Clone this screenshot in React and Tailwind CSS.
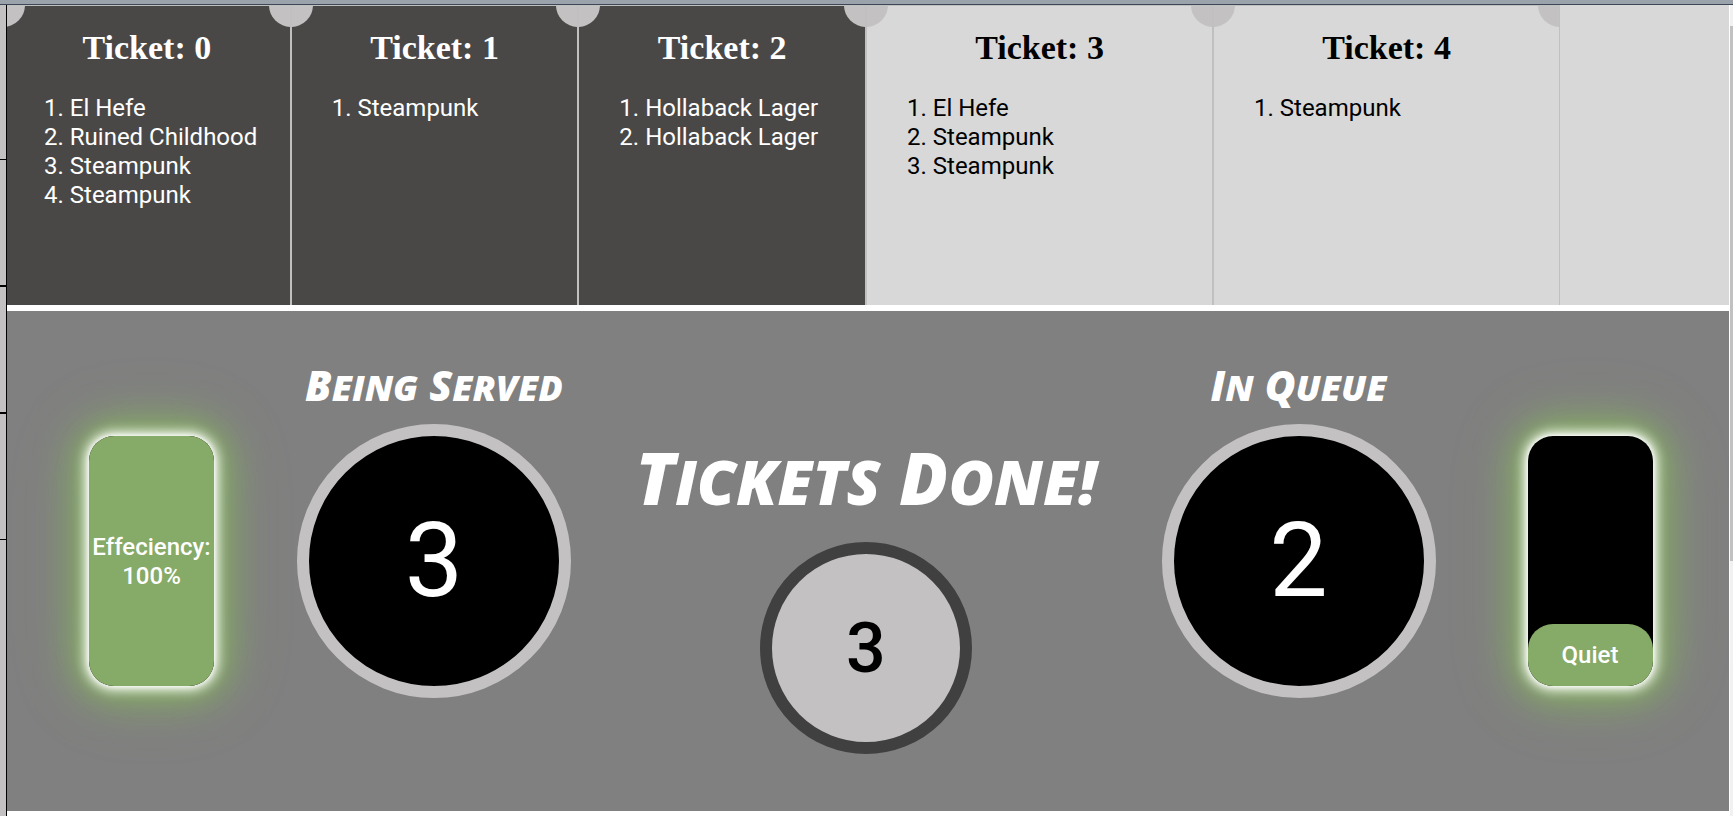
const served = [
  { id: 0, beers: ['El Hefe', 'Ruined Childhood', 'Steampunk', 'Steampunk'] },
  { id: 1, beers: ['Steampunk'] },
  { id: 2, beers: ['Hollaback Lager', 'Hollaback Lager'] },
];

const queued = [
  { id: 3, beers: ['El Hefe', 'Steampunk', 'Steampunk'] },
  { id: 4, beers: ['Steampunk'] },
];

function Ticket({ ticket, tone }) {
  return (
    <article className={`relative min-w-0 flex-1 overflow-hidden border border-b-0 border-[#c0c0c0] ${tone}`}>
      <span className="absolute -top-px -left-px h-[22px] w-[22px] rounded-br-full bg-[#c4c1c2]" />
      <span className="absolute -top-px -right-px h-[22px] w-[22px] rounded-bl-full bg-[#c4c1c2]" />
      <h2 className="mt-5 text-center font-['Liberation_Serif',serif] text-[34px] leading-[44px] font-bold">
        Ticket: {ticket.id}
      </h2>
      <ol className="mt-6 list-inside list-decimal pl-10 text-2xl leading-[29px]">
        {ticket.beers.map((beer, i) => (
          <li key={i}>{beer}</li>
        ))}
      </ol>
    </article>
  );
}

// Sets each word in capitals, with every letter after the first one smaller.
function TallSmallCaps({ text, small }) {
  return text.split(' ').map((word, i) => (
    <span key={word} className="uppercase">
      {i > 0 && ' '}
      {word[0]}
      <span className={small}>{word.slice(1)}</span>
    </span>
  ));
}

function Counter({ title, value }) {
  return (
    <div className="flex flex-col items-center self-start pt-[45px]">
      <h2 className="mb-2 h-[60px] font-['Open_Sans',sans-serif] text-[42px] leading-[58px] font-extrabold whitespace-nowrap italic">
        <TallSmallCaps text={title} small="text-[36px]" />
      </h2>
      <div className="flex size-[274px] items-center justify-center rounded-full border-12 border-[#c4c1c2] bg-black text-[104px] leading-none">
        {value}
      </div>
    </div>
  );
}

function Meter({ fill, children }) {
  return (
    <div className="flex h-[250px] w-[125px] flex-col justify-end rounded-[25px] bg-black shadow-[0_0_5px_#fff,0_0_12px_4px_#fff,0_0_24px_6px_#86aa67,0_0_44px_14px_#86aa67,0_0_70px_12px_#86aa6733]">
      <div className={`flex items-center justify-center rounded-[25px] bg-[#86aa67] pt-0.5 text-center text-2xl leading-[29px] font-medium ${fill}`}>
        {children}
      </div>
    </div>
  );
}

export default function App() {
  return (
    <div className="flex h-screen flex-col overflow-hidden bg-white font-['Roboto',sans-serif]">
      <div className="h-[5px] shrink-0 border-b border-[#3d4756] bg-[#9aa3ac]" />
      <div className="flex min-h-0 flex-1">
        <aside className="z-10 w-[7px] shrink-0 border-r border-black bg-[#c4c1c2]">
          <div className="h-[155px] border-b border-black" />
          <div className="h-[127px] border-b-2 border-black" />
          <div className="h-[127px] border-b-2 border-black" />
          <div className="h-[126px] border-b border-black" />
        </aside>
        <main className="-ml-1 min-w-0 flex-1">
          <section className="grid h-[300px] grid-cols-[863fr_694fr_169fr] bg-[#d8d8d8]">
            <div className="flex">
              {served.map((t) => (
                <Ticket key={t.id} ticket={t} tone="bg-[#4a4846] text-white" />
              ))}
            </div>
            <div className="flex">
              {queued.map((t) => (
                <Ticket key={t.id} ticket={t} tone="bg-[#d8d8d8] text-black" />
              ))}
            </div>
          </section>
          <section className="mt-1.5 grid h-[500px] grid-cols-[minmax(0,295fr)_minmax(0,272fr)_minmax(0,592fr)_minmax(0,273fr)_minmax(0,294fr)] items-center justify-items-center overflow-hidden bg-[#808080] text-white">
            <div className="pl-0.5">
              <Meter fill="h-full">
                Effeciency:
                <br />
                100%
              </Meter>
            </div>
            <Counter title="Being Served" value={3} />
            <div className="flex flex-col items-center self-start pt-30">
              <h1 className="mb-4 h-[95px] font-['Open_Sans',sans-serif] text-[72px] leading-[92px] font-extrabold whitespace-nowrap italic">
                <TallSmallCaps text="Tickets Done!" small="text-[62px]" />
              </h1>
              <div className="flex size-[212px] items-center justify-center rounded-full border-12 border-[#404040] bg-[#c4c1c2] text-[70px] leading-none font-medium text-black">
                3
              </div>
            </div>
            <Counter title="In Queue" value={2} />
            <div className="pl-4">
              <Meter fill="h-1/4">Quiet</Meter>
            </div>
          </section>
        </main>
        <div className="ml-px flex w-[3px] shrink-0 flex-col bg-[#f1f1f1] pt-[21px]">
          <div className="h-[535px] bg-[#c1c1c1]" />
        </div>
      </div>
    </div>
  );
}
